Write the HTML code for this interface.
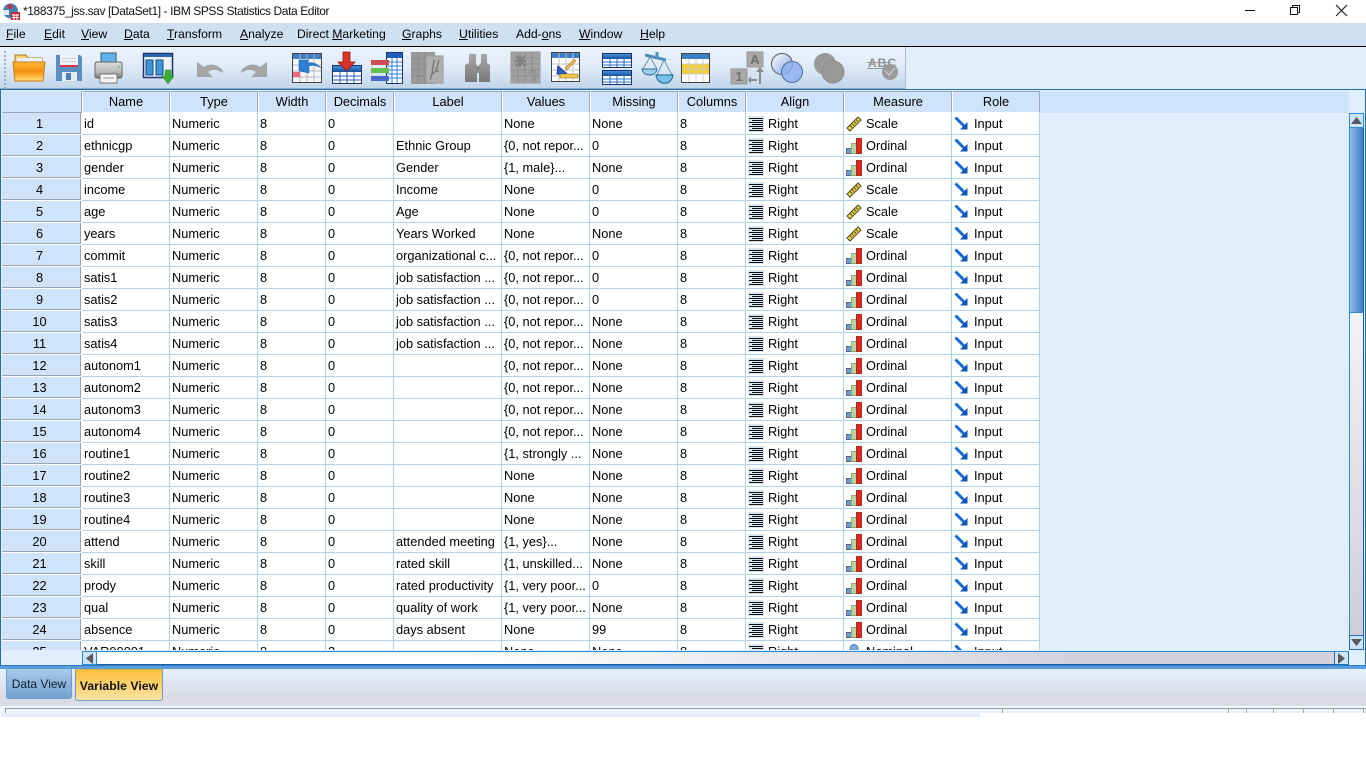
<!DOCTYPE html>
<html><head><meta charset="utf-8"><title>SPSS</title>
<style>
html,body{margin:0;padding:0;width:1366px;height:768px;overflow:hidden;background:#fff;font-family:"Liberation Sans",sans-serif;color:#000}
div{position:absolute;box-sizing:border-box}
.t{white-space:nowrap}
#title{left:23px;top:4px;font-size:12px;letter-spacing:-.4px;line-height:15px;color:#111}
#menu{left:0;top:23px;width:1366px;height:24px;background:#cfe0f1;border-bottom:1px solid #000}
#menu span{position:absolute;top:4px;font-size:12.2px;line-height:15px;white-space:nowrap}
#tbbg{left:0;top:47px;width:1366px;height:43px;background:#e1eefb}
#tb{left:0;top:47px;width:906px;height:42px;background:linear-gradient(#eaf3fd,#e2edf9 40%,#c2d6ea);border-right:1px solid #a9bdd2;border-bottom:1px solid #8fa9c4}
#frame{left:0;top:89px;width:1366px;height:580px;background:#e1eefb;border:1px solid #1f6db5;border-bottom:none}
#hdrfill{left:1040px;top:91px;width:309px;height:22px;background:#cfe3fb}
#clip{left:2px;top:91px;width:1038px;height:559px;overflow:hidden;background:#e1eefb}
table{border-collapse:separate;border-spacing:0;table-layout:fixed;width:1038px;font-size:12.8px;position:absolute;left:0;top:0}
th{height:22px;font-weight:normal;background:#cfe3fb;border-top:1px solid #98a8ba;border-left:1px solid #fff;border-right:1px solid #98a8ba;border-bottom:1px solid #fff;padding:0;text-align:center;box-sizing:border-box;line-height:20px;white-space:nowrap}
td{height:22px;background:#fff;border-right:1px solid #b3d0ef;border-bottom:1px solid #b3d0ef;padding:0 0 0 2px;box-sizing:border-box;white-space:nowrap;overflow:hidden;line-height:20px}
td.r{background:#cfe3fb;text-align:center;padding:0 4px 0 0;border-right:1px solid #fff;border-bottom:1px solid #fff;box-shadow:inset -1px -1px 0 #98a3b0;line-height:20px}
td svg{width:16px;height:16px;vertical-align:-4px;margin-right:4px}
#vs{left:1349px;top:113px;width:15px;height:537px}
#hs{left:82px;top:651px;width:1267px;height:14px;border-top:1px solid #2a8ae0}
#bot{left:0;top:665px;width:1366px;height:4px;background:#5a9cdc;border-top:1px solid #2a7cc8}
#tabs{left:0;top:669px;width:1366px;height:37px;background:linear-gradient(#e6f0fb,#dcdde9 70%,#dadbe7)}
#d{left:6px;top:669px;width:66px;height:30px;background:linear-gradient(#a9c9e8,#74a2d1);border:1px solid #6f9dc9;border-top:none;border-radius:0 0 3px 3px;font-size:12px;line-height:30px;text-align:center;color:#10202e}
#v{left:75px;top:669px;width:88px;height:32px;background:linear-gradient(#fdc03c,#ffe3a3);border:1px solid #6c9ccb;border-top:1px solid #e0b040;border-radius:0 0 3px 3px;font-size:12.3px;font-weight:bold;line-height:32px;text-align:center;color:#111}
#st1{left:1px;top:706px;width:979px;height:11px;background:#e4effb}
#st2{left:0;top:706px;width:1366px;height:7px;background:#eff5fb}
#st3{left:5px;top:708px;width:1361px;height:5px;border-top:1px solid #9c9c9c;border-left:1px solid #9c9c9c}
.sl{top:708px;width:1px;height:5px;background:#a8a8a8}
</style></head><body>
<svg width="0" height="0" style="position:absolute">
<defs>
<symbol id="al" viewBox="0 0 16 16"><rect width="16" height="16" fill="#d8e6f2"/><path d="M1 2.500h14M4 4.500h11M1 6.500h14M4 8.500h11M1 10.500h14M4 12.500h11M1 14.500h14" stroke="#111" stroke-width="1"/></symbol>
<symbol id="sc" viewBox="0 0 16 16"><path d="M1 12L12 1l3 3L4 15z" fill="#f5d442" stroke="#4c4a24" stroke-width="1"/><path d="M4 9.500l2 2M6 7.500l2 2M8 5.500l2 2M10 3.500l2 2" stroke="#4c4a24"/></symbol>
<symbol id="or" viewBox="0 0 16 16"><rect x="0.500" y="10.500" width="5" height="5" fill="#6f9ccb" stroke="#5a6a80"/><rect x="5.500" y="5.500" width="5" height="10" fill="#b6d6a0" stroke="#8aa884"/><rect x="10.500" y="0.500" width="5" height="15" fill="#e5261d" stroke="#a03028"/></symbol>
<symbol id="ip" viewBox="0 0 16 16"><path d="M1.500 1.500L10 10" stroke="#1468d8" stroke-width="3"/><path d="M13.500 6v7.500H6z" fill="#0f55b5"/></symbol>
<symbol id="no" viewBox="0 0 16 16"><circle cx="8" cy="4.500" r="4" fill="#7ea9dc" stroke="#4e7fb8"/><path d="M2 16c0-6 12-6 12 0z" fill="#7ea9dc"/></symbol>
</defs>
</svg>

<svg style="position:absolute;left:2px;top:2px" width="19" height="19" viewBox="0 0 19 19">
<circle cx="8.500" cy="9" r="7.500" fill="#3f7fb5"/><path d="M8 2v5M5.500 4.500h5" stroke="#d8262b" stroke-width="2"/><rect x="1" y="8" width="6" height="5" fill="#dfe9f3"/>
<rect x="9" y="10" width="9" height="8" fill="#c22a35"/><path d="M10 13h7M10 15.500h7M12 12v6M15 12v6" stroke="#fff"/>
</svg>
<div id="title" class="t">*188375_jss.sav [DataSet1] - IBM SPSS Statistics Data Editor</div>
<svg style="position:absolute;left:1240px;top:0" width="126" height="23" viewBox="0 0 126 23">
<path d="M5 10.500h10" stroke="#111" stroke-width="1"/>
<path d="M50.500 7.500h7v7h-7zM52.500 7.500v-2h7v7h-2" fill="none" stroke="#111"/>
<path d="M96 5l11 11M107 5L96 16" stroke="#111" stroke-width="1"/>
</svg>

<div id="menu">
<span style="left:6px"><u>F</u>ile</span><span style="left:44px"><u>E</u>dit</span><span style="left:81px"><u>V</u>iew</span><span style="left:124px"><u>D</u>ata</span><span style="left:167px"><u>T</u>ransform</span><span style="left:240px"><u>A</u>nalyze</span><span style="left:297px">Direct <u>M</u>arketing</span><span style="left:402px"><u>G</u>raphs</span><span style="left:459px"><u>U</u>tilities</span><span style="left:516px">Add-<u>o</u>ns</span><span style="left:579px"><u>W</u>indow</span><span style="left:640px"><u>H</u>elp</span>
</div>
<div id="tbbg"></div>
<div id="tb"></div>
<svg style="position:absolute;left:0;top:46px" width="910" height="44" viewBox="0 46 910 44">
<defs>
<linearGradient id="fo" x1="0" y1="0" x2="0" y2="1"><stop offset="0" stop-color="#fdb93a"/><stop offset=".5" stop-color="#f78f12"/><stop offset="1" stop-color="#ffe070"/></linearGradient>
<linearGradient id="gb" x1="0" y1="0" x2="0" y2="1"><stop offset="0" stop-color="#3d92d8"/><stop offset="1" stop-color="#1a4f9c"/></linearGradient>
<linearGradient id="gr" x1="0" y1="0" x2="0" y2="1"><stop offset="0" stop-color="#a8a8a8"/><stop offset="1" stop-color="#787878"/></linearGradient>
<linearGradient id="la" x1="0" y1="0" x2="1" y2="1"><stop offset="0" stop-color="#fff"/><stop offset="1" stop-color="#7ea4e6"/></linearGradient>
<linearGradient id="pr" x1="0" y1="0" x2="0" y2="1"><stop offset="0" stop-color="#dcdcdc"/><stop offset=".6" stop-color="#bbb"/><stop offset="1" stop-color="#777"/></linearGradient>
</defs>
<path d="M5 51v37" stroke="#9fb0c0" stroke-width="2" stroke-dasharray="2 2"/>
<!-- folder -->
<path d="M15 55h11l2 3h14v8H15z" fill="#f9d26a" stroke="#a87a20"/><rect x="17" y="58" width="25" height="5" fill="#e8f1fa"/>
<path d="M13 62h32l-2 19H15z" fill="url(#fo)" stroke="#c87a10"/>
<!-- save -->
<path d="M56 55h24l2 2v24H56z" fill="#5b8fc4"/><rect x="60" y="55" width="18" height="12" fill="#f0f2f5"/><rect x="60" y="65" width="18" height="2" fill="#d9364c"/><path d="M62 58.500h14M62 61.500h14" stroke="#ccd2da"/><rect x="62" y="72" width="15" height="9" fill="#e4ecf4"/><rect x="66" y="73" width="5" height="7" fill="#4a7db4"/>
<!-- print -->
<rect x="101" y="53" width="15" height="12" fill="#62b4ee" stroke="#456"/><rect x="95" y="62" width="27" height="16" rx="2" fill="url(#pr)" stroke="#666"/><rect x="100" y="74" width="17" height="9" fill="#f4f4f4" stroke="#777"/><path d="M103 78h11" stroke="#999"/><circle cx="119" cy="67" r="1" fill="#5c5"/>
<!-- split -->
<rect x="143.500" y="53.500" width="29" height="24" fill="#eef3f9" stroke="#1b3173" stroke-width="1.500"/><rect x="144" y="54" width="28" height="3" fill="#2868b5"/><rect x="146" y="60" width="7" height="15" fill="#3f97d8" stroke="#19478a"/><rect x="156" y="60" width="7" height="15" fill="#3f97d8" stroke="#19478a"/>
<path d="M165 70h6v6h3l-6 8-6-8h3z" fill="#3cae34" stroke="#2a8024" stroke-width=".5"/>
<!-- undo redo -->
<path d="M197 62L204 67C210 63 218 64 223 71L222 73C218 69 212 69 208 72L213 77H197Z" fill="#a4a4a4"/>
<path d="M267 62L260 67C254 63 246 64 241 71L242 73C246 69 252 69 256 72L251 77H267Z" fill="#a4a4a4"/>
<!-- goto case -->
<rect x="292.500" y="53.500" width="29" height="29" fill="#f4f6f8" stroke="#444"/><rect x="293" y="54" width="28" height="5" fill="#3f7fc6"/><path d="M293 65h28M293 71h28M293 77h28M300 54v28M307 54v28M314 54v28" stroke="#b5bac0"/><rect x="293" y="72" width="7" height="5" fill="#f0647c"/>
<path d="M299 60h10l-2 3c5-1 10 0 14 5-5-3-9-3-12-2v7l-10-2z" fill="#2d7fd6" stroke="#1b5aa8" stroke-width=".5"/>
<!-- goto var -->
<rect x="332.500" y="65.500" width="29" height="18" fill="#fff" stroke="#1b3173"/><rect x="333" y="66" width="28" height="6" fill="url(#gb)"/><path d="M333 76h28M333 80h28M340 72v11M347 72v11M354 72v11" stroke="#2565c0"/>
<path d="M343 52h7v10h5l-8.500 9-8.500-9h5z" fill="#d9342a" stroke="#8e1a14" stroke-width=".8"/>
<!-- variables -->
<rect x="386.500" y="52.500" width="16" height="31" fill="#fff" stroke="#1b3173"/><rect x="387" y="53" width="15" height="5" fill="#2160b8"/><path d="M387 62h15M387 66h15M387 70h15M387 74h15M387 78h15M392 58v25M397 58v25" stroke="#2880d8"/>
<rect x="371" y="60" width="18" height="5" fill="#d14a58"/><rect x="371" y="68" width="18" height="5" fill="#63c04e"/><rect x="371" y="76" width="18" height="5" fill="#4568cc"/>
<!-- mu -->
<rect x="411" y="52" width="24" height="32" fill="#999"/><path d="M411 58h24M411 64h24M411 70h24M411 76h24M418 52v32M425 52v32" stroke="#8a8a8a"/><rect x="426" y="56" width="17" height="27" fill="#b0b0b0" stroke="#999"/><path d="M434 60l-2 14 4-3 3-11M436 68c0 3 1 4 3 3M432 74l-2 6" stroke="#7a7a7a" stroke-width="1.500" fill="none"/>
<!-- binoculars -->
<path d="M469 54h7v9l1 2v17h-12V65l4-2zM481 54h6v9l3 2v17h-11V65l2-2z" fill="url(#gr)"/><rect x="476" y="66" width="4" height="7" fill="#8a8a8a"/>
<!-- gray grid -->
<rect x="511" y="52" width="29" height="31" fill="#a2a2a2" stroke="#999"/><path d="M511 58h29M511 64h29M511 70h29M511 76h29M518 52v31M525 52v31M532 52v31" stroke="#8e8e8e"/><path d="M516 56l9 10M525 56l-9 10M520 55v12M514 61h12" stroke="#808080" stroke-width="2"/><path d="M531 70l4 6v7M528 74l6-4 3 5" stroke="#888" fill="none"/>
<!-- grid pencil -->
<rect x="551.500" y="52.500" width="28" height="29" fill="#fdfdfd" stroke="#444"/><rect x="552" y="53" width="27" height="5" fill="#3f7fc6"/><path d="M552 64h27M552 70h27M552 76h27M559 53v28M566 53v28M573 53v28" stroke="#bcc4cc"/><path d="M558 66l9 8h-10z" fill="#2e5fc8" stroke="#113a90"/><rect x="560" y="74" width="18" height="4" fill="#efc94a" stroke="#7a5a10" stroke-width=".5"/><path d="M565 68l9-9 2 2-9 9z" fill="#e8b44a" stroke="#9c5a2c" stroke-width=".5"/>
<!-- two tables -->
<rect x="602.500" y="53.500" width="29" height="14" fill="#fff" stroke="#1b3173"/><rect x="603" y="54" width="28" height="5" fill="url(#gb)"/><path d="M603 62h28M603 65h28M610 59v8M617 59v8M624 59v8" stroke="#2570d0"/>
<rect x="602.500" y="70.500" width="29" height="14" fill="#fff" stroke="#1b3173"/><rect x="603" y="71" width="28" height="5" fill="url(#gb)"/><path d="M603 79h28M603 82h28M610 76v8M617 76v8M624 76v8" stroke="#2570d0"/>
<!-- scale -->
<path d="M645 55l21 5" stroke="#4f8fb8" stroke-width="3"/><path d="M657 52v6" stroke="#4f8fb8" stroke-width="3"/><path d="M650 57l-7 12M650 57l7 12M664 60l-7 15M664 60l8 15" stroke="#6a96b4" fill="none"/><path d="M642 69h15c-1 8-14 8-15 0z" fill="#9ad0ea" stroke="#2f6f9f"/><path d="M656 75h17c-1 11-16 11-17 0z" fill="#77c0e8" stroke="#1f5f90"/>
<!-- yellow table -->
<rect x="681.500" y="53.500" width="28" height="29" fill="#fff" stroke="#444"/><rect x="682" y="54" width="27" height="5" fill="#3f7fc6"/><rect x="682" y="64" width="27" height="10" fill="#f7ce2c"/><path d="M682 64h27M682 69h27M682 74h27M689 59v23M696 59v23M703 59v23" stroke="#c8cdd2"/>
<!-- 1A -->
<rect x="747" y="52" width="16" height="15" fill="#a8a8a8" stroke="#999"/><text x="755" y="64" font-family="Liberation Sans,sans-serif" font-size="13" font-weight="bold" text-anchor="middle" fill="#6f6f6f">A</text>
<rect x="731" y="69" width="16" height="15" fill="#a8a8a8" stroke="#999"/><text x="739" y="81" font-family="Liberation Sans,sans-serif" font-size="13" font-weight="bold" text-anchor="middle" fill="#6f6f6f">1</text>
<path d="M759 84V72h-3l4-5 4 5h-3v12zM757 76v3h-6v-3l-3 4 3 4v-3h6" fill="#8a8a8a"/>
<!-- circles -->
<circle cx="782" cy="64" r="10.500" fill="url(#la)" stroke="#555"/><circle cx="792" cy="72" r="10.500" fill="#8fb0ee" fill-opacity=".85" stroke="#4a6a9a"/>
<!-- gray circles -->
<circle cx="825" cy="64" r="11" fill="#999"/><circle cx="833" cy="72" r="11" fill="#999" stroke="#8c8c8c"/>
<!-- abc -->
<text x="868" y="67" font-family="Liberation Sans,sans-serif" font-size="12" font-weight="bold" fill="#8d8d8d" textLength="28">ABC</text><path d="M867 62.500h24M867 68.500h18" stroke="#999"/><circle cx="890" cy="72" r="8" fill="#9a9a9a"/><path d="M885 71l4 4 6-7" stroke="#c5c5c5" stroke-width="1.500" fill="none"/>
</svg>

<div id="frame"></div>
<div id="hdrfill"></div>
<div id="clip">
<table>
<colgroup><col style="width:80px"><col style="width:88px"><col style="width:88px"><col style="width:68px"><col style="width:68px"><col style="width:108px"><col style="width:88px"><col style="width:88px"><col style="width:68px"><col style="width:98px"><col style="width:108px"><col style="width:88px"></colgroup>
<tr><th style="border-top:none;border-left:none;border-bottom:1px solid #98a8ba"></th><th>Name</th><th>Type</th><th>Width</th><th>Decimals</th><th>Label</th><th>Values</th><th>Missing</th><th>Columns</th><th>Align</th><th>Measure</th><th>Role</th></tr>
<tr><td class="r">1</td><td>id</td><td>Numeric</td><td>8</td><td>0</td><td></td><td>None</td><td>None</td><td>8</td><td><svg><use href="#al"/></svg>Right</td><td><svg><use href="#sc"/></svg>Scale</td><td><svg><use href="#ip"/></svg>Input</td></tr>
<tr><td class="r">2</td><td>ethnicgp</td><td>Numeric</td><td>8</td><td>0</td><td>Ethnic Group</td><td>{0, not repor...</td><td>0</td><td>8</td><td><svg><use href="#al"/></svg>Right</td><td><svg><use href="#or"/></svg>Ordinal</td><td><svg><use href="#ip"/></svg>Input</td></tr>
<tr><td class="r">3</td><td>gender</td><td>Numeric</td><td>8</td><td>0</td><td>Gender</td><td>{1, male}...</td><td>None</td><td>8</td><td><svg><use href="#al"/></svg>Right</td><td><svg><use href="#or"/></svg>Ordinal</td><td><svg><use href="#ip"/></svg>Input</td></tr>
<tr><td class="r">4</td><td>income</td><td>Numeric</td><td>8</td><td>0</td><td>Income</td><td>None</td><td>0</td><td>8</td><td><svg><use href="#al"/></svg>Right</td><td><svg><use href="#sc"/></svg>Scale</td><td><svg><use href="#ip"/></svg>Input</td></tr>
<tr><td class="r">5</td><td>age</td><td>Numeric</td><td>8</td><td>0</td><td>Age</td><td>None</td><td>0</td><td>8</td><td><svg><use href="#al"/></svg>Right</td><td><svg><use href="#sc"/></svg>Scale</td><td><svg><use href="#ip"/></svg>Input</td></tr>
<tr><td class="r">6</td><td>years</td><td>Numeric</td><td>8</td><td>0</td><td>Years Worked</td><td>None</td><td>None</td><td>8</td><td><svg><use href="#al"/></svg>Right</td><td><svg><use href="#sc"/></svg>Scale</td><td><svg><use href="#ip"/></svg>Input</td></tr>
<tr><td class="r">7</td><td>commit</td><td>Numeric</td><td>8</td><td>0</td><td>organizational c...</td><td>{0, not repor...</td><td>0</td><td>8</td><td><svg><use href="#al"/></svg>Right</td><td><svg><use href="#or"/></svg>Ordinal</td><td><svg><use href="#ip"/></svg>Input</td></tr>
<tr><td class="r">8</td><td>satis1</td><td>Numeric</td><td>8</td><td>0</td><td>job satisfaction ...</td><td>{0, not repor...</td><td>0</td><td>8</td><td><svg><use href="#al"/></svg>Right</td><td><svg><use href="#or"/></svg>Ordinal</td><td><svg><use href="#ip"/></svg>Input</td></tr>
<tr><td class="r">9</td><td>satis2</td><td>Numeric</td><td>8</td><td>0</td><td>job satisfaction ...</td><td>{0, not repor...</td><td>0</td><td>8</td><td><svg><use href="#al"/></svg>Right</td><td><svg><use href="#or"/></svg>Ordinal</td><td><svg><use href="#ip"/></svg>Input</td></tr>
<tr><td class="r">10</td><td>satis3</td><td>Numeric</td><td>8</td><td>0</td><td>job satisfaction ...</td><td>{0, not repor...</td><td>None</td><td>8</td><td><svg><use href="#al"/></svg>Right</td><td><svg><use href="#or"/></svg>Ordinal</td><td><svg><use href="#ip"/></svg>Input</td></tr>
<tr><td class="r">11</td><td>satis4</td><td>Numeric</td><td>8</td><td>0</td><td>job satisfaction ...</td><td>{0, not repor...</td><td>None</td><td>8</td><td><svg><use href="#al"/></svg>Right</td><td><svg><use href="#or"/></svg>Ordinal</td><td><svg><use href="#ip"/></svg>Input</td></tr>
<tr><td class="r">12</td><td>autonom1</td><td>Numeric</td><td>8</td><td>0</td><td></td><td>{0, not repor...</td><td>None</td><td>8</td><td><svg><use href="#al"/></svg>Right</td><td><svg><use href="#or"/></svg>Ordinal</td><td><svg><use href="#ip"/></svg>Input</td></tr>
<tr><td class="r">13</td><td>autonom2</td><td>Numeric</td><td>8</td><td>0</td><td></td><td>{0, not repor...</td><td>None</td><td>8</td><td><svg><use href="#al"/></svg>Right</td><td><svg><use href="#or"/></svg>Ordinal</td><td><svg><use href="#ip"/></svg>Input</td></tr>
<tr><td class="r">14</td><td>autonom3</td><td>Numeric</td><td>8</td><td>0</td><td></td><td>{0, not repor...</td><td>None</td><td>8</td><td><svg><use href="#al"/></svg>Right</td><td><svg><use href="#or"/></svg>Ordinal</td><td><svg><use href="#ip"/></svg>Input</td></tr>
<tr><td class="r">15</td><td>autonom4</td><td>Numeric</td><td>8</td><td>0</td><td></td><td>{0, not repor...</td><td>None</td><td>8</td><td><svg><use href="#al"/></svg>Right</td><td><svg><use href="#or"/></svg>Ordinal</td><td><svg><use href="#ip"/></svg>Input</td></tr>
<tr><td class="r">16</td><td>routine1</td><td>Numeric</td><td>8</td><td>0</td><td></td><td>{1, strongly ...</td><td>None</td><td>8</td><td><svg><use href="#al"/></svg>Right</td><td><svg><use href="#or"/></svg>Ordinal</td><td><svg><use href="#ip"/></svg>Input</td></tr>
<tr><td class="r">17</td><td>routine2</td><td>Numeric</td><td>8</td><td>0</td><td></td><td>None</td><td>None</td><td>8</td><td><svg><use href="#al"/></svg>Right</td><td><svg><use href="#or"/></svg>Ordinal</td><td><svg><use href="#ip"/></svg>Input</td></tr>
<tr><td class="r">18</td><td>routine3</td><td>Numeric</td><td>8</td><td>0</td><td></td><td>None</td><td>None</td><td>8</td><td><svg><use href="#al"/></svg>Right</td><td><svg><use href="#or"/></svg>Ordinal</td><td><svg><use href="#ip"/></svg>Input</td></tr>
<tr><td class="r">19</td><td>routine4</td><td>Numeric</td><td>8</td><td>0</td><td></td><td>None</td><td>None</td><td>8</td><td><svg><use href="#al"/></svg>Right</td><td><svg><use href="#or"/></svg>Ordinal</td><td><svg><use href="#ip"/></svg>Input</td></tr>
<tr><td class="r">20</td><td>attend</td><td>Numeric</td><td>8</td><td>0</td><td>attended meeting</td><td>{1, yes}...</td><td>None</td><td>8</td><td><svg><use href="#al"/></svg>Right</td><td><svg><use href="#or"/></svg>Ordinal</td><td><svg><use href="#ip"/></svg>Input</td></tr>
<tr><td class="r">21</td><td>skill</td><td>Numeric</td><td>8</td><td>0</td><td>rated skill</td><td>{1, unskilled...</td><td>None</td><td>8</td><td><svg><use href="#al"/></svg>Right</td><td><svg><use href="#or"/></svg>Ordinal</td><td><svg><use href="#ip"/></svg>Input</td></tr>
<tr><td class="r">22</td><td>prody</td><td>Numeric</td><td>8</td><td>0</td><td>rated productivity</td><td>{1, very poor...</td><td>0</td><td>8</td><td><svg><use href="#al"/></svg>Right</td><td><svg><use href="#or"/></svg>Ordinal</td><td><svg><use href="#ip"/></svg>Input</td></tr>
<tr><td class="r">23</td><td>qual</td><td>Numeric</td><td>8</td><td>0</td><td>quality of work</td><td>{1, very poor...</td><td>None</td><td>8</td><td><svg><use href="#al"/></svg>Right</td><td><svg><use href="#or"/></svg>Ordinal</td><td><svg><use href="#ip"/></svg>Input</td></tr>
<tr><td class="r">24</td><td>absence</td><td>Numeric</td><td>8</td><td>0</td><td>days absent</td><td>None</td><td>99</td><td>8</td><td><svg><use href="#al"/></svg>Right</td><td><svg><use href="#or"/></svg>Ordinal</td><td><svg><use href="#ip"/></svg>Input</td></tr>
<tr><td class="r">25</td><td>VAR00001</td><td>Numeric</td><td>8</td><td>2</td><td></td><td>None</td><td>None</td><td>8</td><td><svg><use href="#al"/></svg>Right</td><td><svg><use href="#no"/></svg>Nominal</td><td><svg><use href="#ip"/></svg>Input</td></tr>
</table>
</div>

<div id="vs">
<div style="left:0;top:0;width:15px;height:15px;background:#cfe3fb;border:1px solid #2a8ae0"></div>
<svg style="position:absolute;left:2px;top:4px" width="11" height="7"><path d="M5.500 0L11 7H0z" fill="#55585c"/></svg>
<div style="left:0;top:15px;width:15px;height:184px;background:linear-gradient(90deg,#8fbbe6,#3f7fc6);border-left:1px solid #2a8ae0;border-right:1px solid #1b5ea8"></div>
<div style="left:0;top:199px;width:15px;height:323px;background:linear-gradient(#f3f3f7,#d0cdd8);border-left:1px solid #2a8ae0;border-right:1px solid #1b5ea8;border-top:1px solid #2a8ae0"></div>
<div style="left:0;top:522px;width:15px;height:15px;background:#cfe3fb;border:1px solid #1f6db5"></div>
<svg style="position:absolute;left:2px;top:526px" width="11" height="7"><path d="M5.500 7L11 0H0z" fill="#55585c"/></svg>
</div>

<div id="hs">
<div style="left:0;top:0;width:15px;height:13px;background:#cfe3fb;border:1px solid #2a8ae0;border-top:none"></div>
<svg style="position:absolute;left:4px;top:1px" width="7" height="11"><path d="M0 5.500L7 0v11z" fill="#55585c"/></svg>
<div style="left:15px;top:0;width:1237px;height:13px;background:linear-gradient(90deg,#fff,#fff 30%,#d4d1db 80%);border-bottom:1px solid #1f5f9f"></div>
<div style="left:1252px;top:0;width:15px;height:13px;background:#cfe3fb;border:1px solid #1f6db5;border-top:none"></div>
<svg style="position:absolute;left:1256px;top:1px" width="7" height="11"><path d="M7 5.500L0 0v11z" fill="#55585c"/></svg>
</div>

<div id="bot"></div>
<div id="tabs"></div>
<div id="d">Data View</div>
<div id="v">Variable View</div>
<div id="st1"></div>
<div id="st2"></div>
<div id="st3"></div>
<div class="sl" style="left:1002px"></div><div class="sl" style="left:1228px"></div><div class="sl" style="left:1246px"></div><div class="sl" style="left:1273px"></div><div class="sl" style="left:1303px"></div><div class="sl" style="left:1333px"></div><div class="sl" style="left:1363px"></div>
</body></html>
